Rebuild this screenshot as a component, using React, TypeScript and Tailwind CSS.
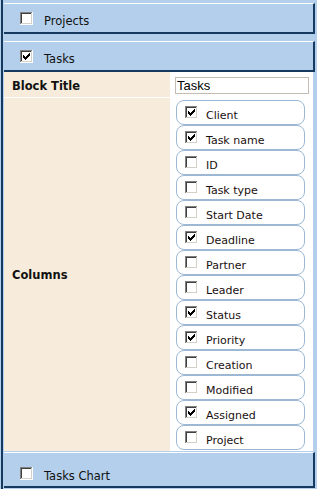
import React from "react";

const COLUMNS: { label: string; checked: boolean }[] = [
  { label: "Client", checked: true },
  { label: "Task name", checked: true },
  { label: "ID", checked: false },
  { label: "Task type", checked: false },
  { label: "Start Date", checked: false },
  { label: "Deadline", checked: true },
  { label: "Partner", checked: false },
  { label: "Leader", checked: false },
  { label: "Status", checked: true },
  { label: "Priority", checked: true },
  { label: "Creation", checked: false },
  { label: "Modified", checked: false },
  { label: "Assigned", checked: true },
  { label: "Project", checked: false },
];

// classic 3D checkbox, 13x13
function Check({ checked }: { checked: boolean }) {
  const offs = [2, 3, 4, 3, 2, 1, 0];
  return (
    <svg width="13" height="13" viewBox="0 0 13 13" shapeRendering="crispEdges" className="shrink-0">
      <rect x="0" y="0" width="13" height="13" fill="#ffffff" />
      <rect x="0" y="0" width="12" height="1" fill="#808080" />
      <rect x="0" y="0" width="1" height="12" fill="#808080" />
      <rect x="1" y="1" width="10" height="1" fill="#404040" />
      <rect x="1" y="1" width="1" height="10" fill="#404040" />
      <rect x="1" y="11" width="11" height="1" fill="#d4d0c8" />
      <rect x="11" y="1" width="1" height="11" fill="#d4d0c8" />
      {checked &&
        offs.map((o, i) => <rect key={i} x={3 + i} y={3 + o} width="1" height="3" fill="#000000" />)}
    </svg>
  );
}

function Header({ title, checked, tall }: { title: string; checked: boolean; tall?: boolean }) {
  return (
    <div
      className={`flex items-start pl-[16px] bg-[#b3cfeb] border-t border-t-white border-r-2 border-b-2 border-r-[#163a5f] border-b-[#163a5f] ${
        tall ? "h-[36px] pt-[14px]" : "h-[31px] pt-[8px]"
      }`}
    >
      <Check checked={checked} />
      <span className="ml-[11px] mt-[2px] text-[11.5px] leading-[14px] text-[#111]">{title}</span>
    </div>
  );
}

export default function App() {
  return (
    <div
      className="w-[317px] h-[489px] bg-[#b3cfeb] pl-[1px] overflow-hidden"
      style={{ fontFamily: '"DejaVu Sans", Verdana, sans-serif' }}
    >
      <div className="h-full border-l-2 border-[#163a5f] pl-[1px] pr-[2px] pt-[3px] flex flex-col">
        <Header title="Projects" checked={false} />
        <div className="mt-[7px]">
          <Header title="Tasks" checked={true} />
        </div>

        {/* block settings */}
        <div className="mr-[2px] grid grid-cols-[166px_1fr] grid-rows-[25px_353px] gap-[1px] bg-white">
          <div className="bg-[#f7ecdc] pl-[8px] pt-[2px] flex items-center">
            <span className="text-[11.5px] leading-[14px] font-bold text-[#111]">Block Title</span>
          </div>
          <div className="bg-white pl-[4px] pt-[5px]">
            <div
              className="w-[134px] h-[17px] border border-[#c6bcb2] px-[1px] text-[13px] leading-[15px] text-black"
              style={{ fontFamily: '"Liberation Sans", Arial, sans-serif' }}
            >
              Tasks
            </div>
          </div>

          <div className="bg-[#f7ecdc] pl-[8px] flex items-center">
            <span className="text-[11.5px] leading-[14px] font-bold text-[#111]">Columns</span>
          </div>
          <div className="bg-white pl-[5px] pt-[2px]">
            {COLUMNS.map((c) => (
              <div
                key={c.label}
                className="w-[129px] h-[25px] border border-[#9cb8d4] rounded-[8px] flex items-start pl-[8px] pt-[5px]"
              >
                <Check checked={c.checked} />
                <span className="ml-[8px] mt-[3px] text-[11px] leading-[14px] text-[#1a1010]">{c.label}</span>
              </div>
            ))}
          </div>
        </div>

        <div className="mt-[1px]">
          <Header title="Tasks Chart" checked={false} tall />
        </div>
      </div>
    </div>
  );
}
